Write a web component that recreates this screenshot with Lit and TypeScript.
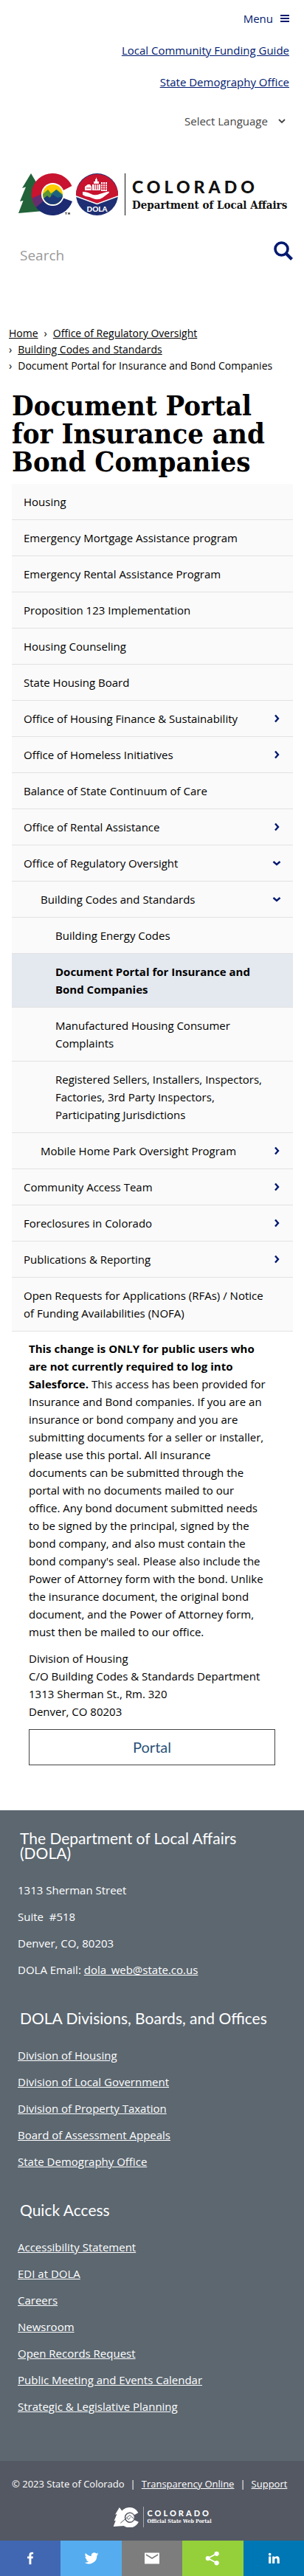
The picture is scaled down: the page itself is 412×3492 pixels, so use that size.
import { LitElement, html, css, svg, nothing } from "lit";
import { customElement, state } from "lit/decorators.js";
import { classMap } from "lit/directives/class-map.js";

interface NavItem {
  label: string;
  current?: boolean;
  expandable?: boolean;
  children?: NavItem[];
}

const NAV: NavItem[] = [
  { label: "Housing" },
  { label: "Emergency Mortgage Assistance program" },
  { label: "Emergency Rental Assistance Program" },
  { label: "Proposition 123 Implementation" },
  { label: "Housing Counseling" },
  { label: "State Housing Board" },
  { label: "Office of Housing Finance & Sustainability", expandable: true },
  { label: "Office of Homeless Initiatives", expandable: true },
  { label: "Balance of State Continuum of Care" },
  { label: "Office of Rental Assistance", expandable: true },
  {
    label: "Office of Regulatory Oversight",
    expandable: true,
    children: [
      {
        label: "Building Codes and Standards",
        expandable: true,
        children: [
          { label: "Building Energy Codes" },
          { label: "Document Portal for Insurance and Bond Companies", current: true },
          { label: "Manufactured Housing Consumer Complaints" },
          {
            label:
              "Registered Sellers, Installers, Inspectors, Factories, 3rd Party Inspectors, Participating Jurisdictions",
          },
        ],
      },
      { label: "Mobile Home Park Oversight Program", expandable: true },
    ],
  },
  { label: "Community Access Team", expandable: true },
  { label: "Foreclosures in Colorado", expandable: true },
  { label: "Publications & Reporting", expandable: true },
  { label: "Open Requests for Applications (RFAs) / Notice of Funding Availabilities (NOFA)" },
];

const DIVISIONS = [
  "Division of Housing",
  "Division of Local Government",
  "Division of Property Taxation",
  "Board of Assessment Appeals",
  "State Demography Office",
];

const QUICK = [
  "Accessibility Statement",
  "EDI at DOLA",
  "Careers",
  "Newsroom",
  "Open Records Request",
  "Public Meeting and Events Calendar",
  "Strategic & Legislative Planning",
];

const SHARE = [
  {
    name: "facebook",
    icon: svg`<path d="M21.7 16.5l.7-4.4h-4.2V9.2c0-1.2.6-2.4 2.500-2.400h1.900V3.100S20.900 2.800 19.200 2.800c-3.500 0-5.700 2.100-5.700 5.900v3.400H9.700v4.400h3.800V29h4.700V16.500z"/>`,
  },
  {
    name: "twitter",
    icon: svg`<path d="M31 6.500c-1.100.5-2.300.8-3.500 1 1.300-.8 2.200-2 2.700-3.400-1.200.7-2.500 1.200-3.900 1.500A6.200 6.200 0 0 0 15.800 11.200C10.700 11 6.200 8.500 3.100 4.800a6.200 6.200 0 0 0 1.900 8.200c-1 0-2-.3-2.800-.8 0 3 2.100 5.600 4.900 6.200-.9.200-1.800.3-2.800.1.800 2.400 3.100 4.200 5.700 4.300A12.400 12.400 0 0 1 1 25.300 17.400 17.400 0 0 0 27.800 9.800c1.300-.9 2.300-2 3.200-3.300z"/>`,
  },
  {
    name: "email",
    icon: svg`<rect y="4" width="32" height="24" rx="1"/><path d="M3 8l13 8 13-8" fill="none" stroke="#7d7d7d" stroke-width="2.400"/>`,
  },
  {
    name: "sharethis",
    icon: svg`<circle cx="25" cy="6" r="5"/><circle cx="25" cy="26" r="5"/><circle cx="6" cy="16" r="5"/><path d="M25 6L6 16l19 10" fill="none" stroke="#fff" stroke-width="3"/>`,
  },
  {
    name: "linkedin",
    icon: svg`<path d="M5 12h5v15H5zM7.500 4.500a2.900 2.900 0 1 1 0 5.800 2.900 2.900 0 0 1 0-5.800zM13 12h4.800v2.100c.7-1.300 2.300-2.500 4.700-2.500 5 0 5.900 3.300 5.900 7.200V27h-5v-7.300c0-1.700 0-3.900-2.500-3.900s-2.900 1.900-2.900 3.800V27h-5z"/>`,
  },
];

@customElement("app-root")
export class AppRoot extends LitElement {
  @state() private open = new Set<string>([
    "Office of Regulatory Oversight",
    "Building Codes and Standards",
  ]);

  static styles = css`
    :host {
      display: block;
      --sans: "Trebuchet MS", "Open Sans", sans-serif;
      --head: Lato, sans-serif;
      --slab: "DejaVu Serif Condensed", "DejaVu Serif", serif;
      --navy: #001970;
      font: 15px/24px var(--sans);
      color: #000;
      background: #fff;
    }
    * {
      box-sizing: border-box;
    }
    a {
      color: inherit;
    }
    h1,
    h2,
    p,
    ul,
    ol {
      margin: 0;
      padding: 0;
    }
    ul,
    ol {
      list-style: none;
    }
    button,
    input,
    select {
      font: inherit;
      color: inherit;
      border: 0;
      background: none;
      padding: 0;
      margin: 0;
    }
    .top {
      display: flex;
      flex-direction: column;
      align-items: flex-end;
      gap: 19px;
      padding: 13px 20px 0;
      color: var(--navy);
    }
    .menu {
      display: flex;
      align-items: center;
      gap: 10px;
    }
    .lang {
      display: flex;
      align-items: center;
      gap: 14px;
      padding: 10px 5px 0 0;
      color: #444;
    }
    .lang select {
      appearance: none;
    }
    .brand {
      display: flex;
      align-items: center;
      gap: 9px;
      padding: 59px 20px 0 25px;
      color: #111;
      text-decoration: none;
    }
    .brand .mark {
      flex: none;
      display: block;
    }
    .words {
      display: flex;
      flex-direction: column;
      border-left: 1px solid #111;
      padding: 5px 0 1px 9px;
      height: 57px;
    }
    .state {
      font: 900 23px/26px var(--head);
      letter-spacing: 5px;
    }
    .dept {
      font: 700 15px/25px var(--slab);
      white-space: nowrap;
    }
    .search {
      display: flex;
      justify-content: space-between;
      padding: 32px 15px 0 27px;
    }
    .search input {
      flex: 1;
      min-width: 0;
      height: 44px;
      font-size: 19px;
      outline: 0;
    }
    .search input::placeholder {
      color: #999;
      opacity: 1;
    }
    .search button {
      height: 32px;
      line-height: 0;
    }
    .crumbs {
      display: flex;
      flex-wrap: wrap;
      column-gap: 8px;
      padding: 73px 12px 0;
      font-size: 14px;
      line-height: 22px;
    }
    .crumbs li {
      display: flex;
      gap: 8px;
    }
    .crumbs li:not(:first-child)::before {
      content: "›";
    }
    h1 {
      padding: 24px 16px 0;
      font: 700 38px/38px var(--slab);
    }
    .side {
      margin: 11px 15px 0 16px;
      background: #fafafa;
    }
    .row {
      display: flex;
      border-bottom: 1px solid #e2e2e2;
    }
    .row a {
      flex: 1;
      padding: 12px 28px 12px 16px;
      text-decoration: none;
    }
    .row.sub a {
      padding-left: 39px;
    }
    .row.leaf a {
      padding-left: 59px;
    }
    .row.current {
      background: #e4e8ef;
      font-weight: 700;
    }
    .row button {
      width: 44px;
      color: var(--navy);
      line-height: 0;
    }
    .row a:not(:last-child) {
      padding-right: 0;
    }
    .copy {
      display: flex;
      flex-direction: column;
      gap: 12px;
      padding: 11px 39px 61px;
    }
    .copy p {
      padding-right: 12px;
    }
    .portal {
      display: block;
      border: 1px solid #444;
      text-align: center;
      text-decoration: none;
      font: 20px/47px var(--head);
      color: #2b5379;
    }
    .foot {
      padding: 28px 24px 56px;
      background: #5c6770;
      color: #fff;
    }
    .foot h2 {
      padding: 0 12px 0 3px;
      font: 400 21px/20px var(--head);
    }
    .foot ul {
      display: flex;
      flex-direction: column;
      gap: 12px;
      padding: 28px 0 44px;
    }
    .foot ul:last-child {
      padding-bottom: 6px;
    }
    .legal {
      padding: 19px 16px 18px;
      background: #545863;
      color: #fff;
      font-size: 13px;
    }
    .legal ul {
      display: flex;
      gap: 8px;
      white-space: nowrap;
    }
    .seal {
      display: flex;
      align-items: center;
      justify-content: center;
      gap: 5px;
      padding: 19px 0 0 28px;
    }
    .seal .words {
      border-color: #a5a8ae;
      height: 28px;
      padding: 3px 0 0 4px;
    }
    .seal .state {
      font-size: 11px;
      line-height: 11px;
      letter-spacing: 3px;
    }
    .seal .dept {
      font-size: 7px;
      line-height: 12px;
    }
    .share {
      display: flex;
    }
    .share button {
      flex: 1;
      height: 48px;
      line-height: 0;
      fill: #fff;
    }
    .facebook {
      background: #4267b2;
    }
    .twitter {
      background: #55acee;
    }
    .email {
      background: #7d7d7d;
    }
    .sharethis {
      background: #95d03a;
    }
    .linkedin {
      background: #0077b5;
    }
  `;

  private toggle(label: string) {
    const next = new Set(this.open);
    if (!next.delete(label)) next.add(label);
    this.open = next;
  }

  private rows(items: NavItem[], depth = 0): unknown {
    return html`<ul>
      ${items.map((item) => {
        const expanded = this.open.has(item.label);
        return html`<li>
          <div class=${classMap({ row: true, sub: depth === 1, leaf: depth === 2, current: !!item.current })}>
            <a href="#" aria-current=${item.current ? "page" : nothing}>${item.label}</a>
            ${item.expandable
              ? html`<button
                  aria-label="Toggle ${item.label}"
                  aria-expanded=${expanded}
                  @click=${() => this.toggle(item.label)}
                >
                  <svg width="12" height="12" viewBox="0 0 12 12" fill="none" stroke="currentColor" stroke-width="2.400">
                    <path d=${expanded ? "M1.500 4L6 8l4.500-4" : "M4 1.500L8 6l-4 4.500"} />
                  </svg>
                </button>`
              : nothing}
          </div>
          ${item.children && expanded ? this.rows(item.children, depth + 1) : nothing}
        </li>`;
      })}
    </ul>`;
  }

  private links(items: string[]) {
    return html`<ul>
      ${items.map((t) => html`<li><a href="#">${t}</a></li>`)}
    </ul>`;
  }

  render() {
    return html`
      <header>
        <div class="top">
          <button class="menu">
            Menu
            <svg width="12" height="12" viewBox="0 0 12 12" fill="currentColor">
              <path d="M0 1h12v2H0zM0 5h12v2H0zM0 9h12v2H0z" />
            </svg>
          </button>
          <a href="#">Local Community Funding Guide</a>
          <a href="#">State Demography Office</a>
          <div class="lang">
            <select aria-label="Select Language">
              <option>Select Language</option>
            </select>
            <svg width="10" height="8" viewBox="0 0 10 8" fill="none" stroke="currentColor" stroke-width="1.800">
              <path d="M1 2l4 4 4-4" />
            </svg>
          </div>
        </div>
        <a class="brand" href="#">
          <svg class="mark" width="135" height="57" viewBox="0 0 135 57" role="img" aria-label="Colorado DOLA">
            <path
              fill="#23633a"
              d="M17 0L5 20l5-1.500L2 38l4.500-1L0 54l34-3V20l-7-3z"
            />
            <clipPath id="cee">
              <path d="M46.500 0A28.500 28.500 0 0 1 72.500 17L58 24.500A13 13 0 1 0 58 32.500L73 38A28.500 28.500 0 1 1 46.500 0z" />
            </clipPath>
            <g clip-path="url(#cee)">
              <path fill="#c8142f" d="M16 0h60v29H46L24 46l-8-10z" />
              <path fill="#652d6d" d="M18 34L40 24v12L24 48z" />
              <path fill="#1c2b72" d="M23 47l18-16h36v26H25z" />
            </g>
            <circle cx="46.500" cy="28.500" r="15.500" fill="#fff" />
            <clipPath id="disc"><circle cx="46.500" cy="28.500" r="13.500" /></clipPath>
            <g clip-path="url(#disc)">
              <path fill="#fc0" d="M30 14h32v30H30z" />
              <path fill="#5d9732" d="M33 28l7-6 4 5 8-5 10 8v14H30z" />
              <path fill="#1d6380" d="M44 29l7-7 10 9v6H44z" />
              <path fill="#1c3a7a" d="M31 37l8-7 3 3 5-4 6 4 8-2v13H31z" />
            </g>
            <path fill="#555" d="M63 53h3v1h-1v2h-1v-2h-1zM67 53h1l.5 1 .5-1h1v3h-1v-1h-1v1h-1z" />
            <circle cx="106.500" cy="28.500" r="28.500" fill="#1f2f73" />
            <path fill="#c8142f" d="M78 28.500a28.500 28.500 0 0 1 57 2L106.500 41 78 30z" />
            <path fill="none" stroke="#fff" stroke-width="1.600" d="M78 31l28.500 10.500L135 31" />
            <g fill="#fff">
              <path d="M87 25q4 0 7 1l7 3q5 1 9-1l10-3q5-1 2 2l-8 6q-6 4-13 1l-5-2q-5 0-9-3z" />
              <path d="M90 18l4-3h3l2 3v5H90z" />
              <path d="M100 15h11v8h-11zM102 11h7v3h-7zM104 8h3v3h-3zM105 6h1v2h-1z" />
              <path d="M112 12h8v12h-8z" />
            </g>
            <path stroke="#c8142f" stroke-width="1" fill="none" d="M103 15v7M105.500 15v7M108 15v7M92 20h6M114.500 12v11M117.500 12v11M112 15h8M112 18h8M112 21h8" />
            <text x="106.500" y="52" text-anchor="middle" fill="#fff" font-family="Lato" font-weight="900" font-size="10">DOLA</text>
          </svg>
          <span class="words">
            <span class="state">COLORADO</span>
            <span class="dept">Department of Local Affairs</span>
          </span>
        </a>
        <form class="search" role="search">
          <input type="search" placeholder="Search" aria-label="Search" />
          <button type="button" aria-label="Search">
            <svg width="26" height="26" viewBox="0 0 26 26" fill="none" stroke="#001970" stroke-width="3.600">
              <circle cx="10.500" cy="10.500" r="8.500" />
              <path d="M16.500 16.500l8 8" stroke-width="4.200" />
            </svg>
          </button>
        </form>
      </header>
      <main>
        <nav aria-label="Breadcrumb">
          <ol class="crumbs">
            <li><a href="#">Home</a></li>
            <li><a href="#">Office of Regulatory Oversight</a></li>
            <li><a href="#">Building Codes and Standards</a></li>
            <li>Document Portal for Insurance and Bond Companies</li>
          </ol>
        </nav>
        <h1>Document Portal for Insurance and Bond Companies</h1>
        <nav class="side" aria-label="Section">${this.rows(NAV)}</nav>
        <div class="copy">
          <p>
            <strong>This change is ONLY for public users who are not currently required to log into Salesforce.</strong>
            This access has been provided for Insurance and Bond companies. If you are an insurance or bond company and
            you are submitting documents for a seller or installer, please use this portal. All insurance documents can
            be submitted through the portal with no documents mailed to our office. Any bond document submitted needs to
            be signed by the principal, signed by the bond company, and also must contain the bond company's seal.
            Please also include the Power of Attorney form with the bond. Unlike the insurance document, the original
            bond document, and the Power of Attorney form, must then be mailed to our office.
          </p>
          <p>
            Division of Housing<br />C/O Building Codes &amp; Standards Department<br />1313 Sherman St., Rm. 320<br />Denver,
            CO 80203
          </p>
          <a class="portal" href="#">Portal</a>
        </div>
      </main>
      <footer>
        <div class="foot">
          <h2>The Department of Local Affairs (DOLA)</h2>
          <ul>
            <li>1313 Sherman Street</li>
            <li>Suite &nbsp;#518</li>
            <li>Denver, CO, 80203</li>
            <li>DOLA Email: <a href="#">dola_web@state.co.us</a></li>
          </ul>
          <h2>DOLA Divisions, Boards, and Offices</h2>
          ${this.links(DIVISIONS)}
          <h2>Quick Access</h2>
          ${this.links(QUICK)}
        </div>
        <div class="legal">
          <ul>
            <li>© 2023 State of Colorado</li>
            <li>|</li>
            <li><a href="#">Transparency Online</a></li>
            <li>|</li>
            <li><a href="#">Support</a></li>
          </ul>
          <div class="seal">
            <svg width="36" height="27" viewBox="0 0 72 56" fill="#fff" aria-hidden="true">
              <path d="M17 0L5 20l5-1.500L2 38l4.500-1L0 54l30-2-8-24 4-16z" />
              <path d="M46.500 0A28.500 28.500 0 0 1 70 15L58 22a14 14 0 1 0 0 13l13 6A28.500 28.500 0 1 1 46.500 0z" />
              <circle cx="46.500" cy="28.500" r="12" />
              <path d="M20 44l26-22 12 10M38 30l5 4 5-6" fill="none" stroke="#545863" stroke-width="2" />
              <circle cx="46.500" cy="28.500" r="14" fill="none" stroke="#545863" stroke-width="2" />
            </svg>
            <span class="words">
              <span class="state">COLORADO</span>
              <span class="dept">Official State Web Portal</span>
            </span>
          </div>
        </div>
        <div class="share">
          ${SHARE.map(
            (s) => html`<button class=${s.name} aria-label=${s.name}>
              <svg width="20" height="20" viewBox="0 0 32 32">${s.icon}</svg>
            </button>`
          )}
        </div>
      </footer>
    `;
  }
}
